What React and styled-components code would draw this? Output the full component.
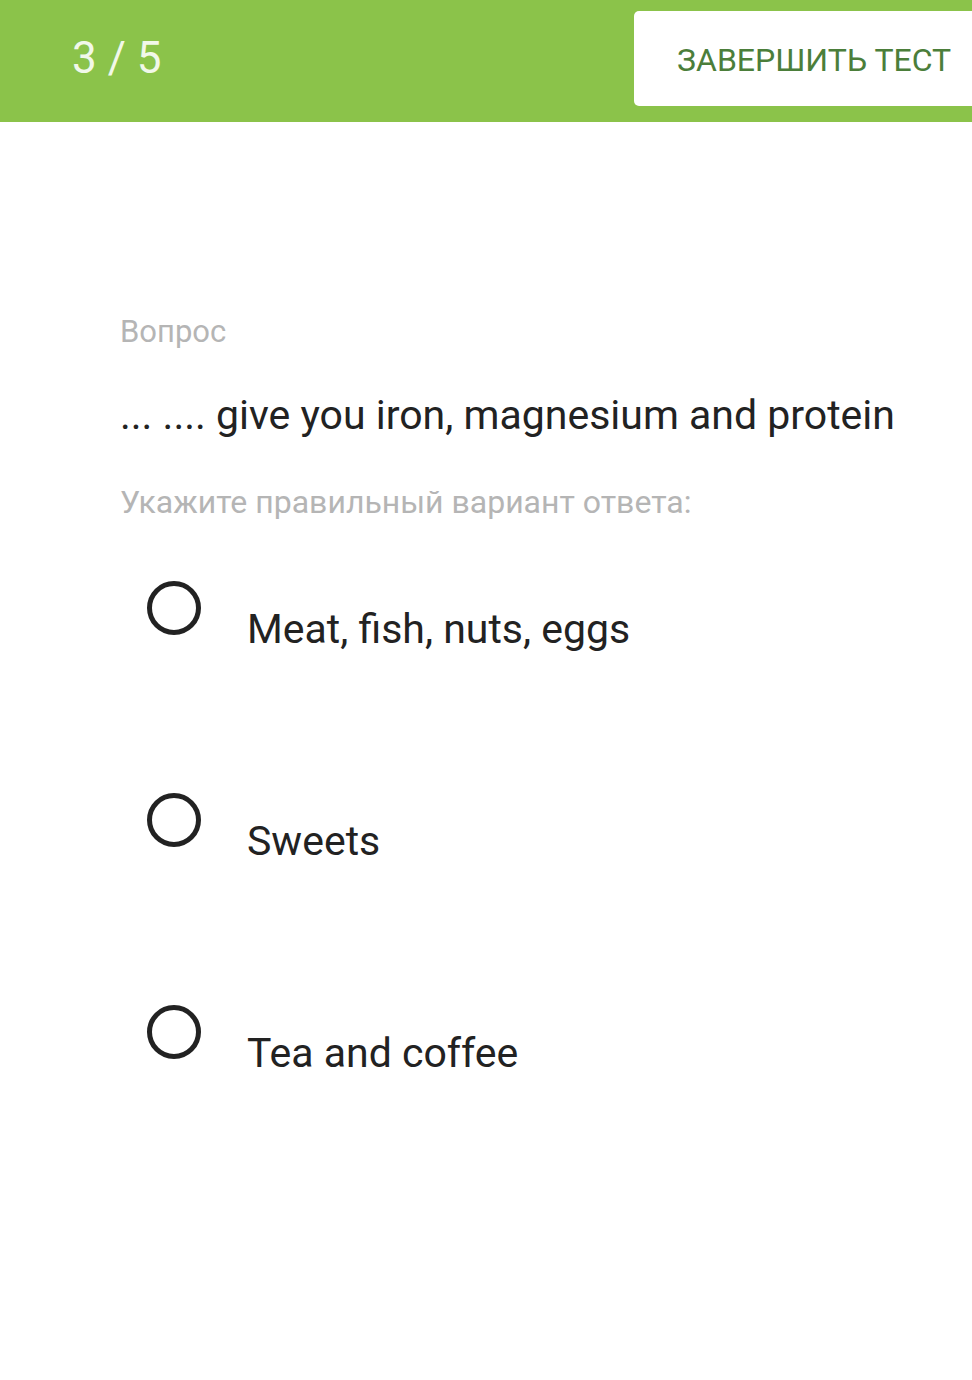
import React from 'react';
import styled, { createGlobalStyle } from 'styled-components';

const GlobalStyle = createGlobalStyle`
  html, body {
    margin: 0;
    padding: 0;
    background: #ffffff;
    font-family: Roboto, "Noto Sans", "Liberation Sans", sans-serif;
  }
`;

const options = ['Meat, fish, nuts, eggs', 'Sweets', 'Tea and coffee'];

export default function App() {
  return (
    <>
      <GlobalStyle />
      <Page>
        <Header>
          <Counter>3 / 5</Counter>
          <FinishButton>ЗАВЕРШИТЬ ТЕСТ</FinishButton>
        </Header>
        <Content>
          <Label>Вопрос</Label>
          <Question>... .... give you iron, magnesium and protein</Question>
          <Hint>Укажите правильный вариант ответа:</Hint>
          <OptionList>
            {options.map((o) => (
              <Option key={o}>
                <Radio />
                <OptionText>{o}</OptionText>
              </Option>
            ))}
          </OptionList>
        </Content>
      </Page>
    </>
  );
}

const Page = styled.div`
  width: 972px;
  min-height: 1380px;
  background: #fff;
`;

const Header = styled.header`
  height: 122px;
  background: #8bc34a;
  display: flex;
  align-items: flex-start;
  justify-content: space-between;
  overflow: hidden;
`;

const Counter = styled.div`
  padding: 28px 0 0 72px;
  font-size: 44px;
  line-height: 60px;
  color: #f1f8e9;
`;

const FinishButton = styled.div`
  margin-top: 11px;
  width: 338px;
  height: 95px;
  box-sizing: border-box;
  padding-left: 43px;
  padding-top: 3px;
  display: flex;
  align-items: center;
  background: #fff;
  border-radius: 5px 0 0 5px;
  color: #4b7e3a;
  font-size: 32px;
  white-space: nowrap;
`;

const Content = styled.main`
  padding: 190px 0 0 120px;
  display: flex;
  flex-direction: column;
`;

const Label = styled.div`
  font-size: 31px;
  line-height: 40px;
  color: #b5b5b5;
`;

const Question = styled.div`
  margin-top: 38px;
  font-size: 41px;
  line-height: 50px;
  color: #222;
`;

const Hint = styled.div`
  margin-top: 42px;
  font-size: 32px;
  line-height: 40px;
  color: #b5b5b5;
`;

const OptionList = styled.div`
  margin-top: 59px;
  display: flex;
  flex-direction: column;
  gap: 158px;
`;

const Option = styled.div`
  display: flex;
  align-items: flex-start;
  padding-left: 27px;
  gap: 46px;
  height: 54px;
`;

const Radio = styled.span`
  flex: none;
  width: 54px;
  height: 54px;
  box-sizing: border-box;
  border: 5px solid #222;
  border-radius: 50%;
`;

const OptionText = styled.div`
  margin-top: 28px;
  font-size: 41px;
  line-height: 40px;
  color: #222;
`;
